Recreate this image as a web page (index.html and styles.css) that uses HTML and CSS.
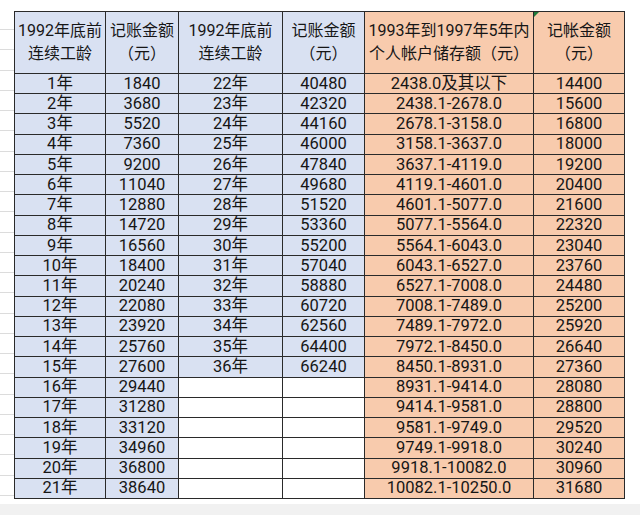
FILE: index.html
```html
<!DOCTYPE html>
<html lang="zh-CN">
<head>
<meta charset="utf-8">
<title>记账金额表</title>
<link rel="stylesheet" href="styles.css">
</head>
<body>
<div class="sheet">
  <div class="gutter"></div>
  <div class="wrap">
    <div class="grid">
      <div class="c b h">1992年底前<br>连续工龄</div>
      <div class="c b h">记账金额<br>（元）</div>
      <div class="c b h">1992年底前<br>连续工龄</div>
      <div class="c b h">记账金额<br>（元）</div>
      <div class="c o h">1993年到1997年5年内<br>个人帐户储存额（元）</div>
      <div class="c o h">记帐金额<br>（元）</div>

      <div class="c b">1年</div><div class="c b">1840</div><div class="c b">22年</div><div class="c b">40480</div><div class="c o">2438.0及其以下</div><div class="c o">14400</div>
      <div class="c b">2年</div><div class="c b">3680</div><div class="c b">23年</div><div class="c b">42320</div><div class="c o">2438.1-2678.0</div><div class="c o">15600</div>
      <div class="c b">3年</div><div class="c b">5520</div><div class="c b">24年</div><div class="c b">44160</div><div class="c o">2678.1-3158.0</div><div class="c o">16800</div>
      <div class="c b">4年</div><div class="c b">7360</div><div class="c b">25年</div><div class="c b">46000</div><div class="c o">3158.1-3637.0</div><div class="c o">18000</div>
      <div class="c b">5年</div><div class="c b">9200</div><div class="c b">26年</div><div class="c b">47840</div><div class="c o">3637.1-4119.0</div><div class="c o">19200</div>
      <div class="c b">6年</div><div class="c b">11040</div><div class="c b">27年</div><div class="c b">49680</div><div class="c o">4119.1-4601.0</div><div class="c o">20400</div>
      <div class="c b">7年</div><div class="c b">12880</div><div class="c b">28年</div><div class="c b">51520</div><div class="c o">4601.1-5077.0</div><div class="c o">21600</div>
      <div class="c b">8年</div><div class="c b">14720</div><div class="c b">29年</div><div class="c b">53360</div><div class="c o">5077.1-5564.0</div><div class="c o">22320</div>
      <div class="c b">9年</div><div class="c b">16560</div><div class="c b">30年</div><div class="c b">55200</div><div class="c o">5564.1-6043.0</div><div class="c o">23040</div>
      <div class="c b">10年</div><div class="c b">18400</div><div class="c b">31年</div><div class="c b">57040</div><div class="c o">6043.1-6527.0</div><div class="c o">23760</div>
      <div class="c b">11年</div><div class="c b">20240</div><div class="c b">32年</div><div class="c b">58880</div><div class="c o">6527.1-7008.0</div><div class="c o">24480</div>
      <div class="c b">12年</div><div class="c b">22080</div><div class="c b">33年</div><div class="c b">60720</div><div class="c o">7008.1-7489.0</div><div class="c o">25200</div>
      <div class="c b">13年</div><div class="c b">23920</div><div class="c b">34年</div><div class="c b">62560</div><div class="c o">7489.1-7972.0</div><div class="c o">25920</div>
      <div class="c b">14年</div><div class="c b">25760</div><div class="c b">35年</div><div class="c b">64400</div><div class="c o">7972.1-8450.0</div><div class="c o">26640</div>
      <div class="c b">15年</div><div class="c b">27600</div><div class="c b">36年</div><div class="c b">66240</div><div class="c o">8450.1-8931.0</div><div class="c o">27360</div>
      <div class="c b">16年</div><div class="c b">29440</div><div class="c w"></div><div class="c w"></div><div class="c o">8931.1-9414.0</div><div class="c o">28080</div>
      <div class="c b">17年</div><div class="c b">31280</div><div class="c w"></div><div class="c w"></div><div class="c o">9414.1-9581.0</div><div class="c o">28800</div>
      <div class="c b">18年</div><div class="c b">33120</div><div class="c w"></div><div class="c w"></div><div class="c o">9581.1-9749.0</div><div class="c o">29520</div>
      <div class="c b">19年</div><div class="c b">34960</div><div class="c w"></div><div class="c w"></div><div class="c o">9749.1-9918.0</div><div class="c o">30240</div>
      <div class="c b">20年</div><div class="c b">36800</div><div class="c w"></div><div class="c w"></div><div class="c o">9918.1-10082.0</div><div class="c o">30960</div>
      <div class="c b">21年</div><div class="c b">38640</div><div class="c w"></div><div class="c w"></div><div class="c o">10082.1-10250.0</div><div class="c o">31680</div>
    </div>
    <span class="flag"></span>
  </div>
</div>
</body>
</html>
```

FILE: styles.css
```css
html, body {
  margin: 0;
  padding: 0;
  background: #ffffff;
}

body {
  width: 640px;
  height: 515px;
  overflow: hidden;
  font-family: Roboto, "Noto Sans CJK SC", sans-serif;
  color: #161616;
}

.sheet {
  display: flex;
  align-items: flex-start;
  height: 515px;
  background: linear-gradient(to bottom, #ffffff 0, #ffffff 504px, #f1f1f1 504px, #f1f1f1 100%);
}

.gutter {
  width: 14px;
  height: 500px;
  flex: none;
  background: repeating-linear-gradient(to bottom, #ffffff 0, #ffffff 19.24px, #dcdcdc 19.24px, #dcdcdc 20.24px);
  background-position: 0 10px;
}

.wrap {
  position: relative;
  margin-top: 11px;
}

.grid {
  display: grid;
  grid-template-columns: 90px 72px 103px 81px 168px 90px;
  grid-template-rows: 61px repeat(21, 1fr);
  gap: 1px;
  width: 611px;
  height: 488px;
  box-sizing: border-box;
  border: 1px solid #2a2a2a;
  background: #2a2a2a;
}

.c {
  display: flex;
  align-items: center;
  justify-content: center;
  font-size: 16.5px;
  line-height: 18px;
  white-space: nowrap;
}

.h {
  font-size: 16px;
  line-height: 23px;
  text-align: center;
  padding-bottom: 1px;
}

.b { background: #d9e1f2; }
.o { background: #f8cbad; }
.w { background: #ffffff; }

.flag {
  position: absolute;
  left: 520px;
  top: 1px;
  width: 0;
  height: 0;
  border-top: 5px solid #1f7a3a;
  border-right: 5px solid transparent;
}
```
